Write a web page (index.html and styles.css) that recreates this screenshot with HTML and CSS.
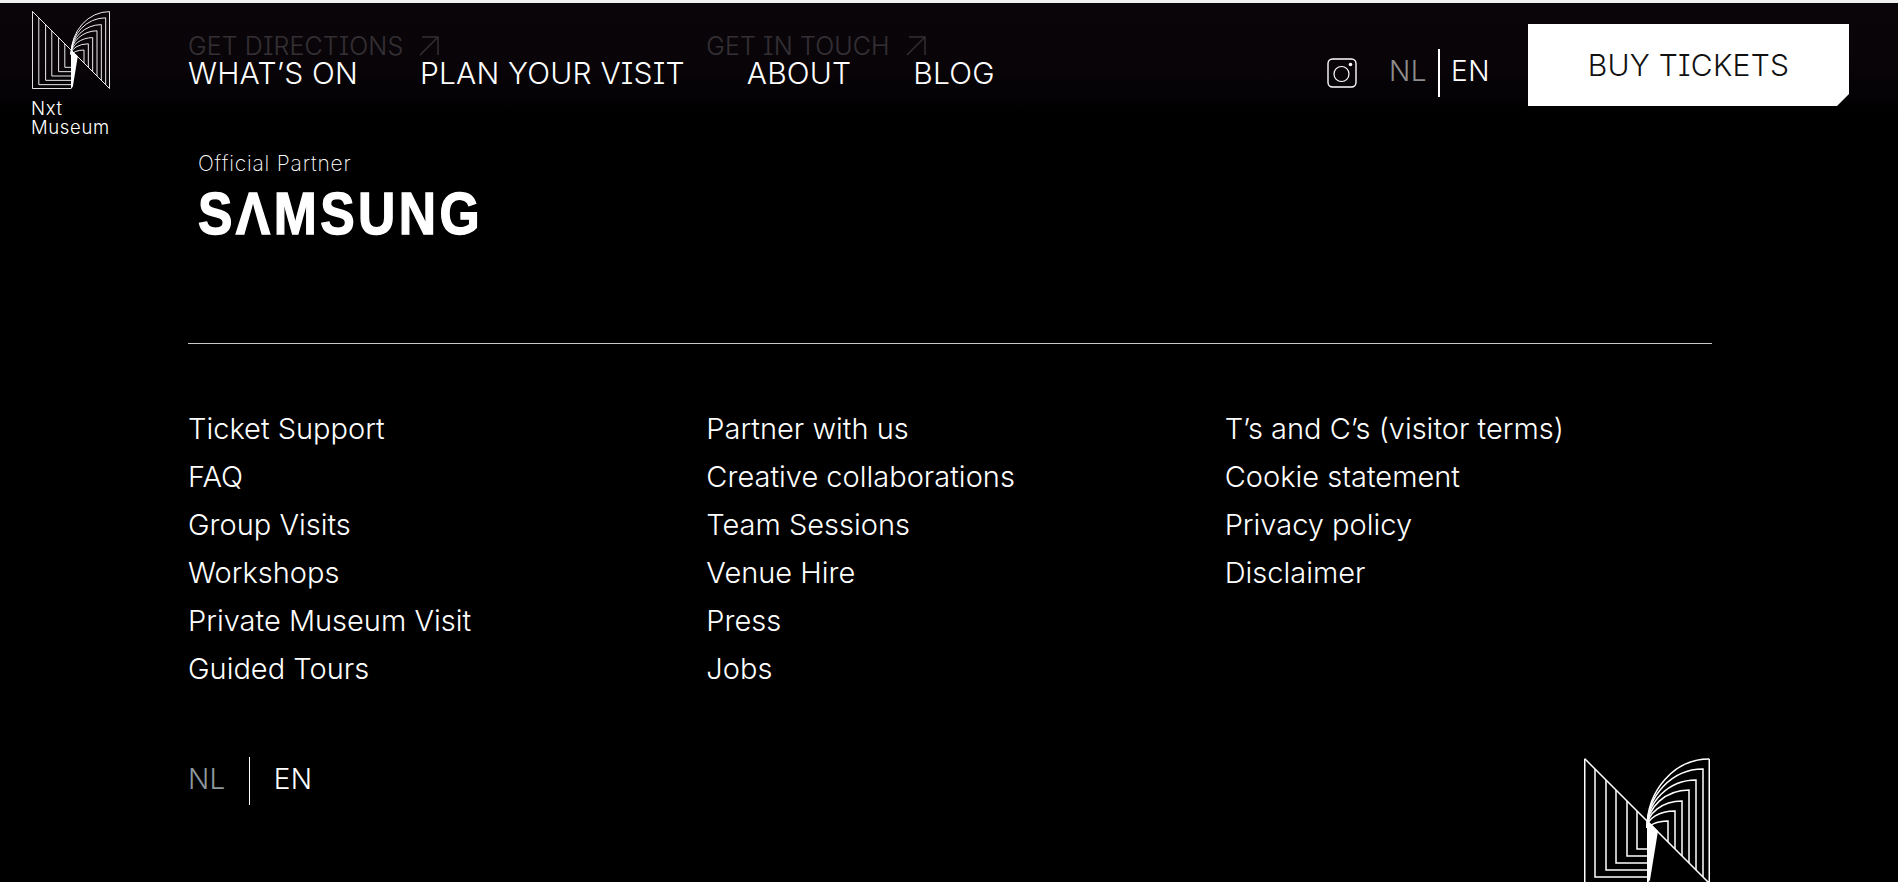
FILE: index.html
```html
<!DOCTYPE html>
<html lang="en">
<head>
<meta charset="utf-8">
<title>Nxt Museum</title>
<link rel="stylesheet" href="styles.css">
</head>
<body>
<svg class="defs" width="0" height="0" aria-hidden="true">
  <symbol id="nxt-mark" viewBox="0 0 126 126" overflow="visible">
    <g fill="none" stroke="currentColor" stroke-width="1.5">
      <path d="M.75 .75V125.25H63"/>
      <path d="M.75 .75L125.25 125.25V.75"/>
      <path d="M11 11V119H63M22 22V112H63M32 32V105H63M43 43V98H63M53 53V91H63"/>
      <path d="M63 70A62 69 0 0 1 125 1"/>
      <path d="M63 70A56 59 0 0 1 119 11V119"/>
      <path d="M63 70A49 48 0 0 1 112 22V112"/>
      <path d="M63 70A42 38 0 0 1 105 32V105"/>
      <path d="M63 70A35 27 0 0 1 98 43V98"/>
      <path d="M63 70A28 17 0 0 1 91 53V91"/>
      <path d="M64 72A20 9 0 0 1 84 63V84"/>
    </g>
    <path class="wedge" d="M63 62L74 73L66 122L63 126Z"/>
  </symbol>
</svg>

<div class="strip"></div>

<header class="header">
  <a class="brand">
    <svg class="brand-mark"><use href="#nxt-mark"/></svg>
    <span class="brand-name">Nxt<br>Museum</span>
  </a>
  <nav class="nav">
    <a>WHAT’S ON</a>
    <a>PLAN YOUR VISIT</a>
    <a>ABOUT</a>
    <a>BLOG</a>
  </nav>
  <div class="tools">
    <svg class="insta" viewBox="0 0 30 30" aria-label="Instagram">
      <rect x="1" y="1" width="28" height="28" rx="4.5" fill="none" stroke="currentColor" stroke-width="1.4"/>
      <circle cx="14.5" cy="16" r="7.5" fill="none" stroke="currentColor" stroke-width="1.2"/>
      <circle cx="23.5" cy="6.5" r="1.8" fill="currentColor"/>
    </svg>
    <div class="lang lang-head">
      <span class="lang-off">NL</span><span class="lang-on">EN</span>
    </div>
    <a class="buy">BUY TICKETS</a>
  </div>
</header>

<main class="footer">
  <div class="grid ghosts">
    <a class="ghost">GET DIRECTIONS
      <svg class="arrow" viewBox="0 0 20 20"><path d="M1 19L19 1M3 1H19V19" fill="none" stroke="currentColor" stroke-width="1.4"/></svg>
    </a>
    <a class="ghost">GET IN TOUCH
      <svg class="arrow" viewBox="0 0 20 20"><path d="M1 19L19 1M3 1H19V19" fill="none" stroke="currentColor" stroke-width="1.4"/></svg>
    </a>
  </div>

  <section class="partner">
    <p class="partner-label">Official Partner</p>
    <p class="samsung" aria-label="SAMSUNG">SΛMSUNG</p>
  </section>

  <hr class="rule">

  <div class="grid links">
    <ul>
      <li>Ticket Support</li>
      <li>FAQ</li>
      <li>Group Visits</li>
      <li>Workshops</li>
      <li>Private Museum Visit</li>
      <li>Guided Tours</li>
    </ul>
    <ul>
      <li>Partner with us</li>
      <li>Creative collaborations</li>
      <li>Team Sessions</li>
      <li>Venue Hire</li>
      <li>Press</li>
      <li>Jobs</li>
    </ul>
    <ul>
      <li>T’s and C’s (visitor terms)</li>
      <li>Cookie statement</li>
      <li>Privacy policy</li>
      <li>Disclaimer</li>
    </ul>
  </div>

  <div class="bottom">
    <div class="lang lang-foot">
      <span class="lang-off">NL</span><span class="lang-on">EN</span>
    </div>
    <svg class="foot-mark"><use href="#nxt-mark"/></svg>
  </div>
</main>
</body>
</html>
```

FILE: styles.css
```css
* { box-sizing: border-box; }

html, body {
  margin: 0;
  height: 100%;
  overflow: hidden;
  background: #000;
  color: #fff;
  font-family: Inter, "Liberation Sans", sans-serif;
  font-weight: 300;
  font-feature-settings: "cv08" 1;
}

.defs { position: absolute; }
.wedge { fill: currentColor; }

.strip { height: 3px; background: #f2f2f2; }

/* Sticky header lying over the footer content */
.header {
  position: absolute;
  top: 3px;
  left: 0;
  right: 0;
  height: 120px;
  display: flex;
  align-items: flex-start;
  padding: 0 49px 0 31px;
  background: linear-gradient(rgba(11, 6, 11, .86), rgba(10, 5, 10, .82) 55%, rgba(0, 0, 0, 0));
}

.brand { width: 157px; padding-top: 8px; display: block; }
.brand-mark { display: block; width: 78px; height: 78px; margin-left: 1px; }
.brand-name { display: block; margin-top: 10px; font-size: 18.5px; line-height: 19px; letter-spacing: .65px; }

.nav { display: flex; gap: 62px; padding-top: 52px; font-size: 30px; line-height: 36px; letter-spacing: .2px; }

.tools { margin-left: auto; display: flex; align-items: flex-start; padding-top: 21px; }
.insta { width: 30px; height: 30px; margin-top: 34px; margin-right: 32px; }

.lang { display: flex; font-size: 28px; }
.lang-off { color: #8d8d8d; }
.lang-head { margin-top: 25px; margin-right: 38px; line-height: 44px; letter-spacing: .5px; }
.lang-head .lang-off { padding: 0 11px 4px 0; border-right: 2px solid #fff; }
.lang-head .lang-on { padding-left: 11px; }

.buy {
  width: 321px;
  height: 82px;
  background: #fff;
  color: #111;
  display: flex;
  align-items: center;
  justify-content: center;
  font-size: 30px;
  letter-spacing: .25px;
  clip-path: polygon(0 0, 100% 0, 100% calc(100% - 12px), calc(100% - 12px) 100%, 0 100%);
}

/* Footer */
.footer { padding: 27px 186px 0 188px; }

.grid { display: grid; grid-template-columns: repeat(3, 1fr); column-gap: 31px; }

.ghost { display: flex; align-items: center; gap: 16px; font-size: 25px; line-height: 32px; letter-spacing: .1px; color: #fff; }
.arrow { width: 20px; height: 20px; }

.partner { padding: 88px 0 0 10px; }
.partner-label { margin: 0; font-size: 21px; line-height: 27px; font-weight: 200; letter-spacing: .8px; }
.samsung {
  margin: 9px 0 0;
  width: 283px;
  font-family: "Liberation Sans", sans-serif;
  font-weight: 700;
  font-size: 60px;
  line-height: 56px;
  letter-spacing: 4px;
  white-space: nowrap;
  -webkit-text-stroke: 1.4px #fff;
  transform: scaleX(.86);
  transform-origin: left center;
}

.rule { margin: 101px 0 0; border: 0; height: 1px; background: #c9c9c9; }

.links { margin-top: 61px; }
.links ul { margin: 0; padding: 0; list-style: none; }
.links li { font-size: 29px; line-height: 48px; letter-spacing: 0; }

.bottom { margin-top: 64px; display: flex; justify-content: space-between; align-items: flex-start; padding-right: 2px; }
.lang-foot { line-height: 44px; letter-spacing: .3px; }
.lang-foot .lang-off { padding: 0 23px 4px 0; border-right: 1px solid #fff; color: #8b989d; }
.lang-foot .lang-on { padding-left: 24px; }
.foot-mark { width: 126px; height: 126px; display: block; margin-top: 1px; }
```
